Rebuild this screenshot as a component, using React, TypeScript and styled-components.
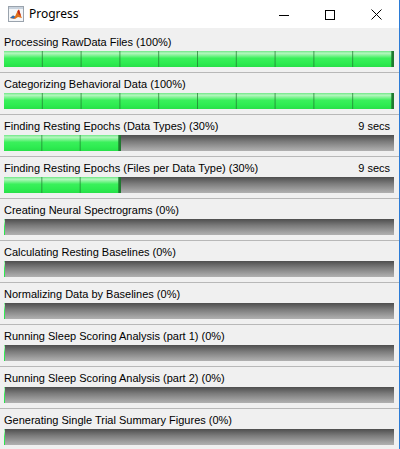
import React from 'react';
import styled, { createGlobalStyle } from 'styled-components';

const GlobalStyle = createGlobalStyle`
  html, body {
    margin: 0;
    padding: 0;
    background: #f0f0f0;
  }
`;

type Task = { label: string; pct: number; time?: string };

const tasks: Task[] = [
  { label: 'Processing RawData Files (100%)', pct: 100 },
  { label: 'Categorizing Behavioral Data (100%)', pct: 100 },
  { label: 'Finding Resting Epochs (Data Types) (30%)', pct: 30, time: '9 secs' },
  { label: 'Finding Resting Epochs (Files per Data Type) (30%)', pct: 30, time: '9 secs' },
  { label: 'Creating Neural Spectrograms (0%)', pct: 0 },
  { label: 'Calculating Resting Baselines (0%)', pct: 0 },
  { label: 'Normalizing Data by Baselines (0%)', pct: 0 },
  { label: 'Running Sleep Scoring Analysis (part 1) (0%)', pct: 0 },
  { label: 'Running Sleep Scoring Analysis (part 2) (0%)', pct: 0 },
  { label: 'Generating Single Trial Summary Figures (0%)', pct: 0 },
];

const App: React.FC = () => {
  return (
    <React.Fragment>
      <GlobalStyle />
      <Window>
        <TitleBar>
          <AppIcon />
          <Title>Progress</Title>
          <Controls>
            <CtrlButton aria-label="minimize">
              <svg width="10" height="10" viewBox="0 0 10 10">
                <path d="M0 5.5h10" stroke="#000" strokeWidth="1" />
              </svg>
            </CtrlButton>
            <CtrlButton aria-label="maximize">
              <svg width="10" height="10" viewBox="0 0 10 10">
                <rect x="0.5" y="0.5" width="9" height="9" fill="none" stroke="#000" strokeWidth="1" />
              </svg>
            </CtrlButton>
            <CtrlButton aria-label="close">
              <svg width="11" height="11" viewBox="0 0 11 11">
                <path d="M0.5 0.5l10 10M10.5 0.5l-10 10" stroke="#000" strokeWidth="1" />
              </svg>
            </CtrlButton>
          </Controls>
        </TitleBar>
        <Body>
          {tasks.map((t) => (
            <Row key={t.label}>
              <LabelLine>
                <span>{t.label}</span>
                {t.time && <span>{t.time}</span>}
              </LabelLine>
              <Track>
                <Fill $pct={t.pct} style={{ width: t.pct > 0 ? `${t.pct}%` : '1px' }} />
              </Track>
            </Row>
          ))}
        </Body>
      </Window>
    </React.Fragment>
  );
};

const AppIcon: React.FC = () => (
  <svg width="16" height="16" viewBox="0 0 16 16" style={{ flex: 'none' }}>
    <rect x="0.5" y="0.5" width="15" height="15" fill="#f4f6f8" stroke="#9aa3ad" />
    <rect x="1" y="1" width="14" height="2" fill="#c9d3de" />
    <path d="M2 12 L5 9.5 L7 10.5 L9.5 5 L11 3.5 L13 10 L14 12 L10 11 L7 13 Z" fill="#e0701a" />
    <path d="M9.5 5 L11 3.5 L13 10 L10.5 8 Z" fill="#c2281c" />
    <path d="M2 12 L5 9.5 L7 10.5 L6 12.5 Z" fill="#2a6fb8" />
  </svg>
);

const Window = styled.div`
  width: 400px;
  height: 449px;
  overflow: hidden;
  box-sizing: border-box;
  border-right: 1px solid #2b7bd6;
  background: #f0f0f0;
  display: flex;
  flex-direction: column;
`;

const TitleBar = styled.div`
  height: 28px;
  flex: none;
  background: #fff;
  display: flex;
  align-items: center;
  padding-left: 8px;
  gap: 5px;
`;

const Title = styled.div`
  font-family: 'Noto Sans', 'Open Sans', sans-serif;
  font-size: 12px;
  color: #000;
  flex: 1;
  padding-bottom: 1px;
`;

const Controls = styled.div`
  display: flex;
  height: 100%;
`;

const CtrlButton = styled.div`
  width: 46px;
  height: 100%;
  display: flex;
  align-items: center;
  justify-content: center;
  padding-top: 1px;
  box-sizing: border-box;
`;

const Body = styled.div`
  flex: 1;
  padding-top: 3px;
  display: flex;
  flex-direction: column;
`;

const Row = styled.div`
  padding: 5px 5px 5px 4px;
  border-bottom: 1px solid #b8b8b8;
  display: flex;
  flex-direction: column;
  gap: 2px;

  &:last-child {
    border-bottom: none;
  }
`;

const LabelLine = styled.div`
  display: flex;
  justify-content: space-between;
  padding-right: 4px;
  font-family: 'Liberation Sans', Arial, sans-serif;
  font-size: 11px;
  line-height: 13px;
  height: 13px;
  color: #000;
  white-space: nowrap;
`;

const Track = styled.div`
  height: 16px;
  width: 390px;
  background: linear-gradient(to bottom, #4e4e4e 0%, #7a7a7a 40%, #a4a4a4 85%, #b0b0b0 100%);
  display: flex;
`;

const Fill = styled.div<{ $pct: number }>`
  height: 100%;
  box-sizing: border-box;
  border-right: ${(p) => (p.$pct > 0 ? '2px solid #1f7a30' : 'none')};
  background-image:
    ${(p) =>
      p.$pct > 0
        ? 'linear-gradient(to right, transparent calc(100% - 1px), rgba(30, 120, 45, 0.7) calc(100% - 1px)),'
        : ''}
    linear-gradient(
      to bottom,
      #6fe786 0%,
      #b4f6be 14%,
      #86f498 26%,
      #3af05b 45%,
      #2eec51 75%,
      #28e049 100%
    );
  background-size: ${(p) => (p.$pct > 0 ? `${(1000 / p.$pct).toFixed(3)}% 100%, 100% 100%` : '100% 100%')};
  background-repeat: repeat-x, no-repeat;
`;

export default App;
